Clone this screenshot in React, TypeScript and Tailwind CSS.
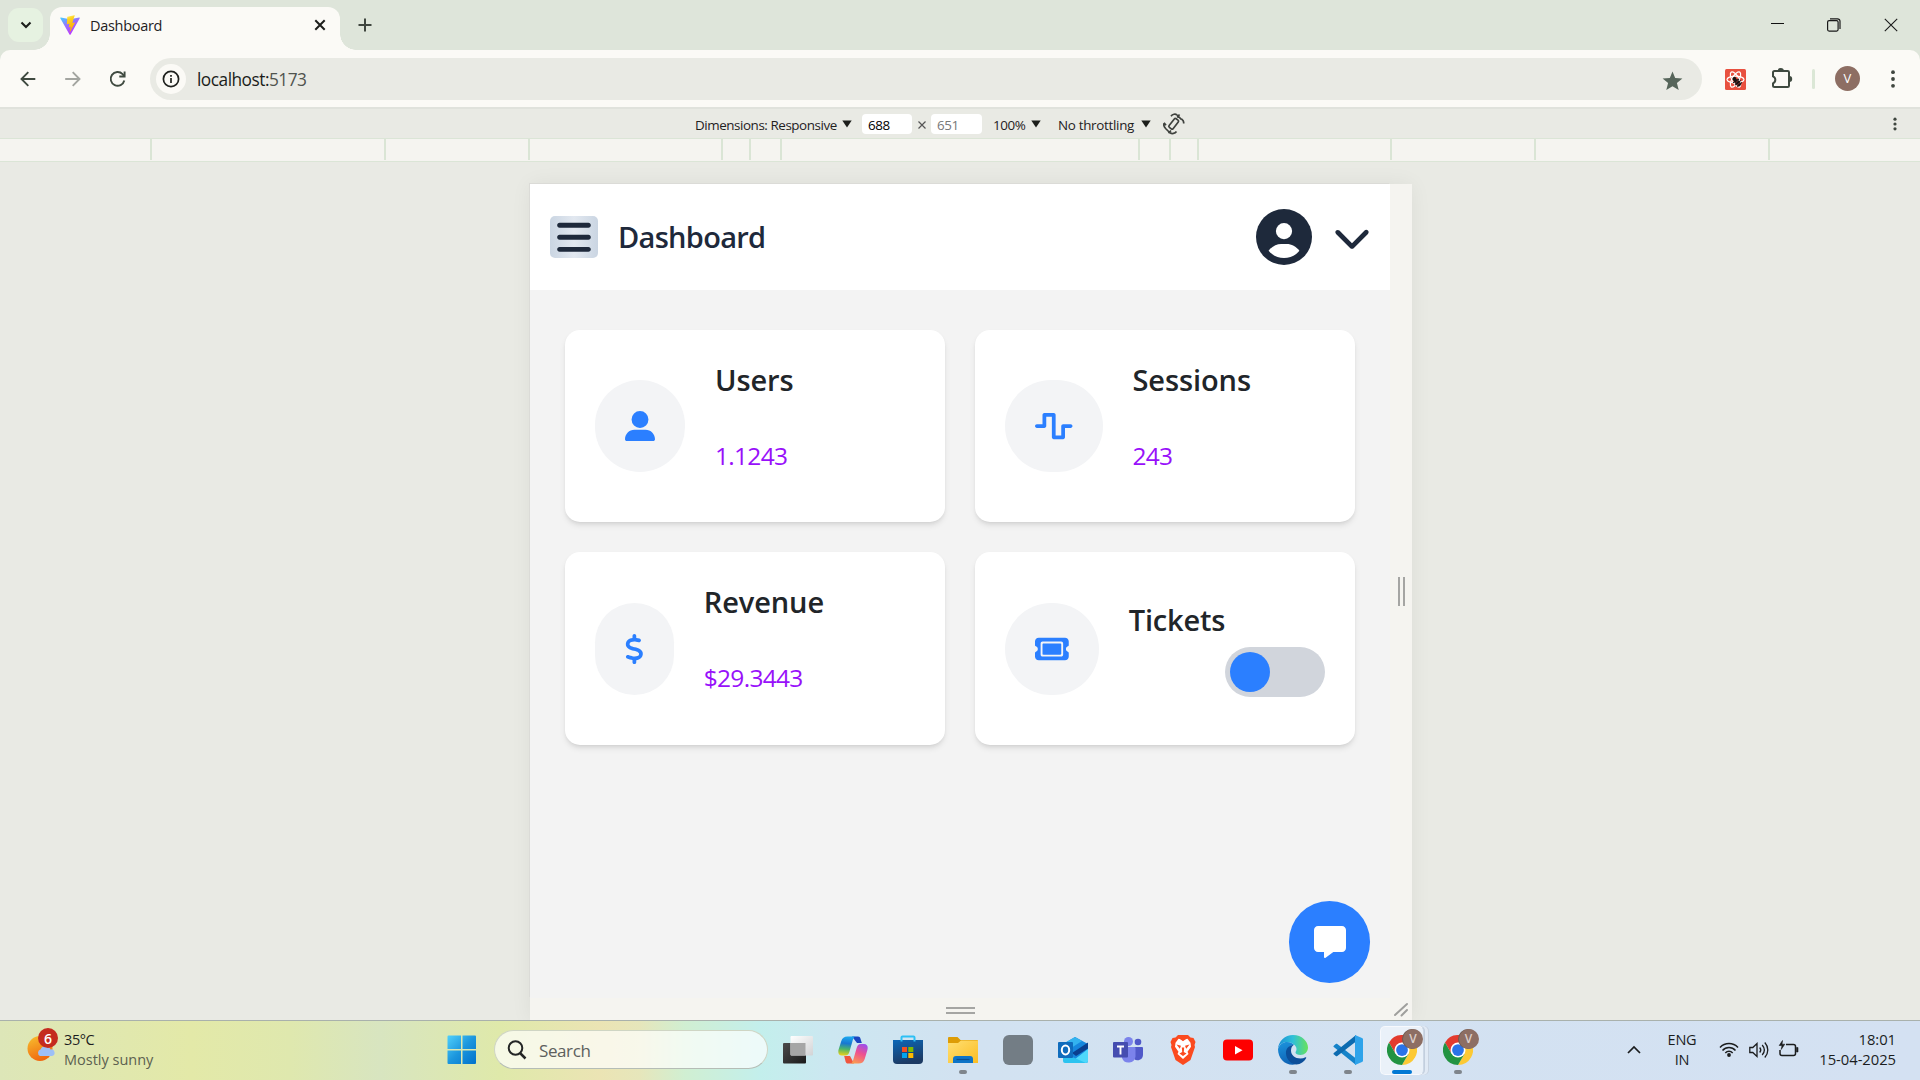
import React from "react";
import { FaUserLarge, FaWaveSquare, FaDollarSign, FaTicket, FaBars, FaChevronDown, FaMessage } from "react-icons/fa6";

const Caret = ({ className = "" }: { className?: string }) => (
  <svg className={`shrink-0 ${className}`} width="10" height="8" viewBox="0 0 10 8">
    <path d="M0.3 0.5h9.4L5 7.6z" fill="#1c1e1b" />
  </svg>
);

const Dots = ({ r, gap, className = "" }: { r: number; gap: number; className?: string }) => (
  <svg className={className} width="6" height="20" viewBox="0 0 6 20" fill="#3f463f">
    <circle cx="3" cy={10 - gap} r={r} />
    <circle cx="3" cy="10" r={r} />
    <circle cx="3" cy={10 + gap} r={r} />
  </svg>
);

function ViteLogo() {
  return (
    <svg width="20" height="20" viewBox="0 0 32 32">
      <defs>
        <linearGradient id="va" x1="0" y1="0" x2="0.6" y2="1">
          <stop offset="0" stopColor="#41D1FF" />
          <stop offset="0.5" stopColor="#9b6cff" />
          <stop offset="1" stopColor="#BD34FE" />
        </linearGradient>
        <linearGradient id="vb" x1="0.4" y1="0" x2="0.6" y2="1">
          <stop offset="0" stopColor="#FFEA5A" />
          <stop offset="0.2" stopColor="#FFD21f" />
          <stop offset="1" stopColor="#FFA200" />
        </linearGradient>
      </defs>
      <path d="M31.6 5.2 16.8 31.4c-.3.5-1 .5-1.4 0L.5 5.2c-.3-.6.2-1.3.8-1.1L16 6.7l14.8-2.6c.7-.1 1.1.5.8 1.1z" fill="url(#va)" />
      <path d="M23 .5 12 2.6c-.3 0-.4.2-.4.4L11 14.4c0 .3.2.5.5.4l3-.7c.3 0 .5.2.5.5l-1 4.5c0 .3.2.6.5.5l2-.6c.3 0 .5.2.5.5l-1.500 7c0 .4.5.7.7.3L24 12.500c.2-.3 0-.6-.4-.5l-3.100.6c-.3 0-.5-.2-.5-.5l2-7.100L23.500 1c0-.3-.2-.6-.5-.5z" fill="url(#vb)" />
    </svg>
  );
}

function TabStrip() {
  return (
    <div className="flex h-[50px] bg-[#dee5da]">
      <div className="ml-2 mt-2 flex h-[34px] w-[35px] items-center justify-center rounded-[11px] bg-[#e6f2e1]">
        <svg width="12" height="8" viewBox="0 0 12 8" fill="none" stroke="#1c1e1b" strokeWidth="2.1">
          <path d="M1.500 1.500 6 6l4.500-4.500" />
        </svg>
      </div>
      <div className="relative ml-[7px] mt-[7px] flex h-[43px] w-[290px] rounded-t-[12px] bg-[#fbfaf6]">
        <div className="absolute bottom-0 -left-4 size-4 bg-[radial-gradient(circle_at_0_0,transparent_15.5px,#fbfaf6_16px)]" />
        <div className="absolute bottom-0 -right-4 size-4 bg-[radial-gradient(circle_at_100%_0,transparent_15.5px,#fbfaf6_16px)]" />
        <div className="ml-[10px] mt-2">
          <ViteLogo />
        </div>
        <span className="ml-[10px] mt-[7px] text-[14.500px] leading-6 tracking-[-0.3px] text-[#1f211e]">Dashboard</span>
        <svg className="absolute left-[264px] top-[12px]" width="12" height="12" viewBox="0 0 12 12" stroke="#1c1e1b" strokeWidth="2">
          <path d="M1.300 1.300l9.400 9.400M10.700 1.300l-9.400 9.400" />
        </svg>
      </div>
      <svg className="ml-[18px] mt-[18px]" width="14" height="14" viewBox="0 0 14 14" stroke="#3f463f" strokeWidth="2">
        <path d="M7 .5v13M.5 7h13" />
      </svg>
      <div className="ml-auto mr-[22px] flex">
        <svg className="mt-[23px]" width="13" height="2">
          <rect y="0" width="13" height="1" fill="#111" />
        </svg>
        <svg className="ml-[43px] mt-[18px]" width="14" height="14" viewBox="0 0 14 14" fill="none" stroke="#1a1a1a" strokeWidth="1.200">
          <rect x=".6" y="2.600" width="10.500" height="10.500" rx="1.500" />
          <path d="M3 .8h7.500a2.500 2.500 0 0 1 2.500 2.500V11" />
        </svg>
        <svg className="ml-[43px] mt-[18px]" width="14" height="14" viewBox="0 0 14 14" stroke="#1a1a1a" strokeWidth="1.100">
          <path d="M.8.8l12.400 12.400M13.200.8.8 13.200" />
        </svg>
      </div>
    </div>
  );
}

function AddressBar() {
  return (
    <div className="bg-[#dee5da]">
      <div className="flex h-[57px] rounded-t-[10px] bg-[#fbfaf6] pt-2">
        <svg className="ml-[20px] mt-[13px]" width="16" height="16" viewBox="0 0 16 16" fill="none" stroke="#3f4a40" strokeWidth="1.900">
          <path d="M15.300 8H1.800M8.300 1.200 1.500 8l6.800 6.800" />
        </svg>
        <svg className="ml-[29px] mt-[13px]" width="16" height="16" viewBox="0 0 16 16" fill="none" stroke="#a3a5a0" strokeWidth="1.900">
          <path d="M.2 8h14M7.700 1.200 14.500 8l-6.800 6.800" />
        </svg>
        <svg className="ml-[28px] mt-[12px]" width="18" height="18" viewBox="0 0 18 18" fill="none" stroke="#3f4a40" strokeWidth="1.900">
          <path d="M15.300 10.500A6.900 6.900 0 1 1 13.600 4.100L15 5.800" />
          <path d="M15.600 1.500v5h-5.300" />
        </svg>
        <div className="ml-[23px] flex h-[42px] w-[1552px] items-center rounded-full bg-[#e9eae4] pl-[6px] pr-[19px]">
          <div className="flex size-[30px] items-center justify-center rounded-full bg-[#fbfaf6]">
            <svg width="18" height="18" viewBox="0 0 18 18" fill="none" stroke="#1f211e" strokeWidth="1.700">
              <circle cx="9" cy="9" r="7.600" />
              <path d="M9 8v5M9 5v1.700" />
            </svg>
          </div>
          <span className="ml-[11px] mt-[2px] text-[17.300px] leading-6 tracking-[-0.500px] text-[#1b1d1a]">
            localhost:<span className="text-[#50544e]">5173</span>
          </span>
          <svg className="ml-auto mt-[3px]" width="21" height="20" viewBox="0 0 21 20">
            <path d="M10.500.500l2.700 6.600 7.200.5-5.500 4.500 1.800 7L10.500 15.300l-6.200 3.800 1.800-7L.6 7.600l7.200-.5z" fill="#56655a" />
          </svg>
        </div>
        <svg className="ml-[23px] mt-[11px]" width="21" height="21" viewBox="0 0 21 21">
          <rect width="21" height="21" rx="1.500" fill="#e8503f" />
          <g fill="none" stroke="#fff" strokeWidth="1.200">
            <ellipse cx="10.500" cy="10.500" rx="8.500" ry="3.400" />
            <ellipse cx="10.500" cy="10.500" rx="8.500" ry="3.400" transform="rotate(60 10.500 10.500)" />
            <ellipse cx="10.500" cy="10.500" rx="8.500" ry="3.400" transform="rotate(120 10.500 10.500)" />
          </g>
          <g transform="rotate(-40 12 13)" fill="#151515">
            <circle cx="12" cy="9" r="2" />
            <ellipse cx="12" cy="14" rx="2.400" ry="4" />
            <path d="M8.500 11l7 1M8.500 14.200h7.500M9 17l6.500-.5" stroke="#151515" strokeWidth="1" />
            <path d="M10 12.800l4-.3M10 15.400h4" stroke="#a33" strokeWidth=".7" />
          </g>
        </svg>
        <svg className="ml-[25px] mt-[10px]" width="22" height="21" viewBox="0 0 22 21">
          <path d="M3.500 3h13.200a1.300 1.300 0 0 1 1.300 1.300v13.400a1.300 1.300 0 0 1-1.300 1.300H3.500a1.500 1.500 0 0 1-1.500-1.500v-2.200a3.800 3.800 0 0 0 0-7V4.500A1.500 1.500 0 0 1 3.500 3z" fill="none" stroke="#3f4a40" strokeWidth="2" />
          <path d="M6.800 2.500a3 2.500 0 0 1 6 0zM18.500 8a2.700 3 0 0 1 0 6z" fill="#3f4a40" />
        </svg>
        <div className="ml-[19px] mt-[11px] h-[20px] w-[3px] rounded bg-[#dbe7d6]" />
        <div className="ml-[20px] mt-[8px] flex size-[25px] items-center justify-center rounded-full bg-[#8d6e63] text-[13px] text-white">V</div>
        <Dots r={1.900} gap={6.800} className="ml-[29.500px] mt-[11px]" />
      </div>
    </div>
  );
}

function DeviceToolbar() {
  return (
    <div className="flex h-[31px] items-center border-t-2 border-[#e0e2dc] bg-[#e9eae4] pl-[695px] text-[13.400px] tracking-[-0.430px] text-[#1f211e]">
      <span className="w-[147px] whitespace-nowrap pt-[3px]">Dimensions: Responsive</span>
      <Caret className="mt-px" />
      <span className="ml-[10px] mt-px h-5 w-[50px] rounded bg-white pl-[6px] pt-px leading-5 text-black">688</span>
      <svg className="ml-[6px] mt-[2px]" width="8" height="8" viewBox="0 0 8 8" stroke="#555" strokeWidth="1.200">
        <path d="M.5.500l7 7M7.500.500l-7 7" />
      </svg>
      <span className="ml-[5px] mt-px h-5 w-[51px] rounded bg-white pl-[6px] pt-px leading-5 text-[#777]">651</span>
      <span className="ml-[11px] w-[38px] pt-[3px]">100%</span>
      <Caret className="mt-px" />
      <span className="ml-[17px] w-[83px] whitespace-nowrap pt-[3px] tracking-[-0.3px]">No throttling</span>
      <Caret className="mt-px" />
      <svg className="ml-[12px]" width="22" height="22" viewBox="0 0 22 22" fill="none" stroke="#3f423e" strokeWidth="1.700">
        <rect x="8.200" y="5.300" width="5" height="11" rx="1.300" transform="rotate(38 10.700 10.800)" />
        <path d="M8 3.200C9.500 1 12.500.6 14 2l4.300 4.300M16.500 1.500l-2.300 3M20.500 10.500c.6-1.800-.2-3.200-2-4.500" />
        <path d="M1 10.500c-.6 1.800.2 3.500 1.600 5l4 4M5.500 20.200 8 17.500M13.500 18.500c-1.500 2.200-4.500 2.600-6.500 1.200M3 12.300l-2-2.500" />
      </svg>
      <Dots r={1.600} gap={4.800} className="ml-auto mr-[22px]" />
    </div>
  );
}

function Ruler() {
  const marks = [150, 384, 528, 721, 749, 780, 1138, 1169, 1197, 1390, 1534, 1768];
  return (
    <div className="flex h-[24px] border-y border-[#dbe5d6] bg-[#f5f4f0]">
      {marks.map((x, i) => (
        <div
          key={x}
          className="h-[21px] w-[2px] shrink-0 bg-[#dae5d5]"
          style={{ marginLeft: i === 0 ? x : x - marks[i - 1] - 2 }}
        />
      ))}
    </div>
  );
}

function StatCard({ icon, title, value }: { icon: React.ReactNode; title: string; value: string }) {
  return (
    <div className="flex items-center gap-[30px] rounded-[15px] bg-white p-[30px] shadow-md">
      <div className="rounded-full bg-[#f3f4f6] px-[30px] py-[31px] text-[#2b7fff]">{icon}</div>
      <div className="-mt-px flex h-[132px] flex-col">
        <h2 className="text-[29px] font-semibold leading-10 tracking-[-0.1px] text-[#212529]">{title}</h2>
        <p className="mt-[38px] text-[24.500px] leading-9 tracking-[-0.7px] text-[#9810fa]">{value}</p>
      </div>
    </div>
  );
}

function DashboardPage() {
  return (
    <div className="relative h-[814px] w-[860px] bg-[#f3f3f3]">
      <header className="flex h-[106px] items-center bg-white pl-5 pr-[19px] text-[#1e293b]">
        <button className="flex h-[42px] w-[48px] items-center justify-center rounded-[5px] bg-[linear-gradient(to_right,#cad5e2,#e2e8f0,#cad5e2)]">
          <FaBars className="h-[38.500px] w-[34px]" />
        </button>
        <h1 className="ml-[20px] text-[29px] font-semibold tracking-[-0.7px]">Dashboard</h1>
        <svg className="ml-auto" width="56" height="56" viewBox="2 2 20 20">
          <circle cx="12" cy="12" r="10" fill="#1e293b" />
          <circle cx="12" cy="9.900" r="2.900" fill="#fff" />
          <path d="M6.500 16.900C7.600 15.400 9.400 14.500 11 14.500h2c1.600 0 3.400.9 4.500 2.400-1.300 1.700-3.300 2.600-5.500 2.600s-4.200-.9-5.500-2.600z" fill="#fff" />
        </svg>
        <FaChevronDown className="ml-[21px] h-[38px] w-[38px]" />
      </header>
      <main className="grid grid-cols-2 grid-rows-[192px_193px] gap-[30px] px-[35px] pt-[40px]">
        <StatCard icon={<FaUserLarge size={30} />} title="Users" value="1.1243" />
        <StatCard icon={<FaWaveSquare className="h-[30px] w-[37.500px]" />} title="Sessions" value="243" />
        <StatCard icon={<FaDollarSign className="h-[30px] w-[18.750px]" />} title="Revenue" value="$29.3443" />
        <div className="flex items-center rounded-[15px] bg-white p-[30px] shadow-md">
          <div className="rounded-full bg-[#f3f4f6] px-[30px] py-[31px] text-[#2b7fff]">
            <FaTicket className="h-[30px] w-[33.750px]" />
          </div>
          <h2 className="-mt-[58px] ml-[30px] w-[96px] text-[29px] font-semibold leading-10 tracking-[-0.2px] text-[#212529]">Tickets</h2>
          <div className="mt-[47px] h-[50px] w-[100px] shrink-0 rounded-full bg-[#d1d5dc] p-[5px]">
            <div className="size-10 rounded-full bg-[#2b7fff]" />
          </div>
        </div>
      </main>
      <div className="absolute bottom-[15px] right-[20px] flex h-[82px] w-[81px] items-center justify-center rounded-full bg-[#2b7fff] text-white">
        <FaMessage size={32} />
      </div>
    </div>
  );
}

function DeviceStage() {
  return (
    <div className="h-[858px] overflow-hidden bg-[#e9eae4] pl-[530px] pt-[22px]">
      <div className="flex h-[836px] w-[882px] flex-wrap bg-[#f5f4f0] shadow-[0_0_20px_rgba(0,0,0,0.06)]">
        <div className="shadow-[-1px_-1px_0_#dbdbd7]">
          <DashboardPage />
        </div>
        <div className="flex h-[814px] w-[22px] items-center justify-center gap-[3px]">
          <div className="h-[29px] w-[2px] bg-[#a5a5a3]" />
          <div className="h-[29px] w-[2px] bg-[#a5a5a3]" />
        </div>
        <div className="flex h-[22px] w-[860px] flex-col items-center justify-center gap-[3px] pt-[2px]">
          <div className="h-[2px] w-[29px] bg-[#a5a5a3]" />
          <div className="h-[2px] w-[29px] bg-[#a5a5a3]" />
        </div>
        <svg width="22" height="22" viewBox="0 0 22 22" stroke="#9f9f9d" strokeWidth="2" strokeLinecap="round">
          <path d="M5 17 17 6M11.500 17.500l5.500-5.500" />
        </svg>
      </div>
    </div>
  );
}

function ChromeIcon() {
  return (
    <div className="relative size-[30px]">
      <svg width="30" height="30" viewBox="0 0 48 48">
        <path d="M24 12h20.800A24 24 0 0 1 24 48l10.400-18z" fill="#fcc934" />
        <path d="M24 12h20.800A24 24 0 0 0 3.200 12l10.400 18z" fill="#e33b2e" />
        <path d="M34.400 30 24 48A24 24 0 0 1 3.200 12l10.400 18z" fill="#229342" />
        <circle cx="24" cy="24" r="12" fill="#fff" />
        <circle cx="24" cy="24" r="9.400" fill="#2a73e8" />
      </svg>
      <div className="absolute -top-[6px] left-[16px] flex size-[20px] items-center justify-center rounded-full bg-[#8d6e63] text-[12px] font-semibold text-[#dccfca] shadow-[-1px_0_0_#6f5850]">V</div>
    </div>
  );
}

const StartIcon = () => (
  <svg width="30" height="30" viewBox="0 0 30 30">
    <defs>
      <linearGradient id="st" x1="0" y1="0" x2="1" y2="1">
        <stop offset="0" stopColor="#4fd0fb" />
        <stop offset="0.500" stopColor="#1c96dd" />
        <stop offset="1" stopColor="#0071cc" />
      </linearGradient>
    </defs>
    <path d="M1.500.5H14V14H.5V1.500a1 1 0 0 1 1-1zM15.500.5H28a1 1 0 0 1 1 1V14H15.500zM.5 15.500H14V29H1.500a1 1 0 0 1-1-1zM15.500 15.500H29V28a1 1 0 0 1-1 1H15.500z" fill="url(#st)" />
  </svg>
);

const TaskViewIcon = () => (
  <svg width="30" height="30" viewBox="0 0 30 30">
    <defs>
      <linearGradient id="tv" x1="0" y1="0" x2="1" y2="1">
        <stop offset="0" stopColor="#4b4b4b" />
        <stop offset="1" stopColor="#1b1b1b" />
      </linearGradient>
      <linearGradient id="tw" x1="0" y1="0" x2="1" y2="1">
        <stop offset="0" stopColor="#fff" />
        <stop offset="1" stopColor="#d2d3d5" />
      </linearGradient>
    </defs>
    <rect x="0" y="8" width="23" height="20.500" rx="1" fill="url(#tv)" />
    <rect x="7.500" y="1" width="22.500" height="19.500" rx="1" fill="url(#tw)" />
    <path d="M7.500 8H22.500v12.500H8.500a1 1 0 0 1-1-1z" fill="#a6a6a6" />
  </svg>
);

const CopilotIcon = () => (
  <svg width="30" height="30" viewBox="0 0 30 30">
    <defs>
      <linearGradient id="ca" x1="0.300" y1="0" x2="0.200" y2="1">
        <stop offset="0" stopColor="#1aa7ee" />
        <stop offset="0.350" stopColor="#1877d2" />
        <stop offset="0.650" stopColor="#4bb56a" />
        <stop offset="1" stopColor="#f2d216" />
      </linearGradient>
      <linearGradient id="cb" x1="0.700" y1="0" x2="0.300" y2="1">
        <stop offset="0" stopColor="#a04de8" />
        <stop offset="0.450" stopColor="#ee5190" />
        <stop offset="1" stopColor="#fb9b51" />
      </linearGradient>
    </defs>
    <path d="M14 1.500h6c1.500 0 2 .8 2.500 2.300l1.300 4.200H19z" fill="#1b45c0" />
    <path d="M9.500 1.500h8.500c-2 .2-2.600 1.500-3.200 3.500l-3.300 11.500c-.7 2.500-1.700 4-4.500 4H4C.5 20.500-.2 17.500.6 14.500L3.300 6c1-3 2.800-4.500 6.200-4.500z" fill="url(#ca)" />
    <path d="M16 28.500h-6c-1.500 0-2-.8-2.500-2.300L6.200 21H12z" fill="#f0553e" />
    <path d="M20.500 28.500H12c2-.2 2.600-1.500 3.200-3.500l3.300-11.500c.7-2.500 1.700-4.500 4.500-4.500h3c3.500 0 4.200 3 3.400 6L26.700 24c-1 3-2.800 4.500-6.200 4.500z" fill="url(#cb)" />
  </svg>
);

const StoreIcon = () => (
  <svg width="30" height="30" viewBox="0 0 30 30">
    <defs>
      <linearGradient id="sa" x1="0" y1="0" x2="0.300" y2="1">
        <stop offset="0" stopColor="#0b67b8" />
        <stop offset="1" stopColor="#1c3a63" />
      </linearGradient>
    </defs>
    <path d="M8.500 7V2.500a1 1 0 0 1 1-1h11a1 1 0 0 1 1 1V7" fill="none" stroke="#2cc0f5" strokeWidth="2" />
    <path d="M0 5h30v20a4 4 0 0 1-4 4H4a4 4 0 0 1-4-4z" fill="url(#sa)" />
    <path d="M9 12h5v5H9z" fill="#f25022" />
    <path d="M15.300 12h5v5h-5z" fill="#7fba00" />
    <path d="M9 18h5v5H9z" fill="#00a4ef" />
    <path d="M15.300 18h5v5h-5z" fill="#ffb900" />
    <path d="M8.500 5v1.500M21.500 5v1.500" stroke="#2cc0f5" strokeWidth="2" />
  </svg>
);

const FolderIcon = () => (
  <svg width="30" height="30" viewBox="0 0 30 30">
    <defs>
      <linearGradient id="fa" x1="0" y1="0" x2="1" y2="1">
        <stop offset="0" stopColor="#ffdf73" />
        <stop offset="1" stopColor="#fbbd22" />
      </linearGradient>
    </defs>
    <path d="M0 3a1 1 0 0 1 1-1h8.500L12.500 5H29a1 1 0 0 1 1 1v6H0z" fill="#dd9c06" />
    <path d="M0 8h10l3-2.500h17V28H0z" fill="url(#fa)" />
    <path d="M5 28v-4a3 3 0 0 1 3-3h14a3 3 0 0 1 3 3v4z" fill="#0e74c7" />
    <path d="M8.500 24.500h13" stroke="#0a4f90" strokeWidth="1.200" />
  </svg>
);

const OutlookIcon = () => (
  <svg width="30" height="30" viewBox="0 0 30 30">
    <path d="M5 9 17 2l13 7v17a2 2 0 0 1-2 2H7z" fill="#1687dd" />
    <path d="M5 9 17 2l7 4-14 9z" fill="#33b3ef" />
    <path d="M14 18 30 7.500v6L18 21z" fill="#0a3f8f" />
    <path d="M12 28 30 14v12a2 2 0 0 1-2 2z" fill="#4fd8fb" />
    <path d="M5 18l23 10H7a2 2 0 0 1-2-2z" fill="#2cc3f0" />
    <rect y="7" width="15" height="16" rx="1" fill="#0f6cbd" />
    <ellipse cx="7.500" cy="15" rx="3.700" ry="4.400" fill="none" stroke="#fff" strokeWidth="2" />
  </svg>
);

const TeamsIcon = () => (
  <svg width="30" height="30" viewBox="0 0 30 30">
    <circle cx="25" cy="7" r="3.300" fill="#5059c9" />
    <path d="M19 12h10a1 1 0 0 1 1 1v7a5.500 5.500 0 0 1-9 4z" fill="#5059c9" />
    <circle cx="15.500" cy="6.500" r="4.500" fill="#7b83eb" />
    <path d="M9 12h12.500a1 1 0 0 1 1 1v8.500A7 7 0 0 1 9 23z" fill="#7b83eb" />
    <rect y="7" width="15" height="15.500" rx="1" fill="#454db0" />
    <path d="M4 11.500h7M7.500 11.500v8" stroke="#fff" strokeWidth="1.900" />
  </svg>
);

const BraveIcon = () => (
  <svg width="26" height="30" viewBox="0 0 26 30">
    <path d="M8 0h10l2.500 2.500L23.500 3l2 4-1 3 .5 2-4.500 13L13 30l-7.500-5L1 12l.5-2-1-3 2-4 3-.5z" fill="#fb4a1f" />
    <path d="M13 4.800l4.500-1 3 4 .5 4-3.500 5 1 2.200-5.500 5-5.500-5 1-2.200-3.500-5 .5-4 3-4z" fill="#fff" />
    <path d="M6.500 9.500l4.500 1.300-1.200 3zM19.500 9.500 15 10.800l1.200 3zM11.800 12.500h2.400l-.4 4.500 2.700 1.500-3.500 2.500-3.500-2.500 2.700-1.500zM10 4l3 2.300L16 4z" fill="#fb4a1f" />
  </svg>
);

const YoutubeIcon = () => (
  <svg width="30" height="30" viewBox="0 0 30 30">
    <rect y="4.500" width="30" height="21" rx="4" fill="#fe0000" />
    <path d="M12 11v8.500l7.500-4.200z" fill="#fff" />
  </svg>
);

const EdgeIcon = () => (
  <svg width="30" height="30" viewBox="0 0 30 30">
    <defs>
      <linearGradient id="ea" x1="0" y1="0.500" x2="1" y2="0.500">
        <stop offset="0" stopColor="#1b8fd6" />
        <stop offset="0.500" stopColor="#2fc0d8" />
        <stop offset="1" stopColor="#68e25a" />
      </linearGradient>
      <linearGradient id="eb" x1="0" y1="0" x2="0.300" y2="1">
        <stop offset="0" stopColor="#1c95de" />
        <stop offset="1" stopColor="#0f63b5" />
      </linearGradient>
    </defs>
    <path d="M0 14C.5 6 7 0 15 0c9 0 15 6.500 15 12.500 0 4.500-3.500 7.500-7.500 7.500-3 0-5-1.200-5-2.500 0-1 1-1.500 1-3.500C18.500 10.500 14 7 9 7c-4 0-7.500 2-9 7z" fill="url(#ea)" />
    <path d="M0 14c1.500-4.500 5-7 9-7 3 0 5.500 1.200 7 2.800-4 0-6.500 4-6 8C10.500 23 15 27 20 28a15 15 0 0 1-5 1.800C6.500 30 0 23 0 14z" fill="url(#eb)" />
    <path d="M16 9.800c-5 .5-8.500 4-8 9 .5 6 5.500 10.700 10.500 10.700 4 0 8-3 9.700-6.500.3-.7-.2-1-.7-.7-1.500.8-3.200 1.200-5 1.200-5.500 0-9.500-3.500-9.500-8 0-2.500 1-4.700 3-5.700z" fill="#0c4f9a" />
  </svg>
);

const VscodeIcon = () => (
  <svg width="30" height="30" viewBox="0 0 30 30">
    <path d="M1 10.500 2.800 9c.5-.4 1-.4 1.500 0L23 23.500V30L.8 12c-.6-.5-.4-1 .2-1.500z" fill="#1583c9" />
    <path d="M1 19.500 2.800 21c.5.4 1 .4 1.500 0L23 6.500V0L.8 18c-.6.500-.4 1 .2 1.500z" fill="#0c6bb0" />
    <path d="M22 0l7 3a1.500 1.500 0 0 1 1 1.500v21a1.500 1.500 0 0 1-1 1.500l-7 3z" fill="#2ea3ea" />
  </svg>
);

function TaskItem({ children, state }: { children: React.ReactNode; state?: "open" }) {
  return (
    <div className="flex w-[55px] flex-col items-center pt-[14px]">
      <div className="flex h-[30px] items-center">{children}</div>
      {state === "open" && <div className="mt-[5px] h-1 w-[8px] rounded-full bg-[#7f858c]" />}
    </div>
  );
}

function Taskbar() {
  return (
    <div className="flex h-[60px] border-t border-[#a9b1ac] bg-[linear-gradient(to_right,#dde6b8_0px,#e3e9a8_190px,#dfe8ae_290px,#d8e5c0_380px,#dfe9aa_500px,#ebe4b4_600px,#e6e6bb_640px,#d0efd2_685px,#c3efec_760px,#cce7f1_830px,#d2e2f1_960px,#d4e1f2_1920px)] text-[#1b1d1e]">
      <div className="relative ml-[27px] mt-[13px] h-[30px] w-[30px]">
        <svg width="30" height="30" viewBox="0 0 30 30">
          <defs>
            <linearGradient id="sun" x1="0.200" y1="0" x2="0.600" y2="1">
              <stop offset="0" stopColor="#f7bb2d" />
              <stop offset="1" stopColor="#f0640d" />
            </linearGradient>
          </defs>
          <circle cx="13" cy="14.500" r="12.500" fill="url(#sun)" />
          <path d="M13 22a3.500 3.500 0 0 1 .5-6.500 5.500 5.500 0 0 1 10 0A3.300 3.300 0 0 1 25 22z" fill="#9dc0f7" />
        </svg>
        <div className="absolute -top-[6px] left-[11px] flex size-[20px] items-center justify-center rounded-full bg-[#c42b1f] text-[14px] font-semibold text-white">6</div>
      </div>
      <div className="ml-[7px] flex w-[383px] flex-col pt-[9px] text-[14.500px] leading-5">
        <span className="tracking-[-0.4px]">35°C</span>
        <span className="text-[#5c6150]">Mostly sunny</span>
      </div>
      <div className="pt-[14px]">
        <StartIcon />
      </div>
      <div className="ml-[17px] mt-[9px] flex h-[39px] w-[274px] items-center rounded-full border border-[#cfd5c4] border-b-[#b5bdb6] bg-white/70 pl-[12px]">
        <svg width="20" height="20" viewBox="0 0 20 20" fill="none" stroke="#242626" strokeWidth="2">
          <circle cx="8.500" cy="8" r="6.800" />
          <path d="M13 13l5.500 5.500" strokeWidth="2.500" />
        </svg>
        <span className="ml-[12px] pt-[2px] text-[17px] leading-6 tracking-[-0.4px] text-[#5d605d]">Search</span>
      </div>
      <div className="ml-[2px] flex">
        <TaskItem><TaskViewIcon /></TaskItem>
        <TaskItem><CopilotIcon /></TaskItem>
        <TaskItem><StoreIcon /></TaskItem>
        <TaskItem state="open"><FolderIcon /></TaskItem>
        <TaskItem><div className="size-[30px] rounded-[6px] bg-[#737d85]" /></TaskItem>
        <TaskItem><OutlookIcon /></TaskItem>
        <TaskItem><TeamsIcon /></TaskItem>
        <TaskItem><BraveIcon /></TaskItem>
        <TaskItem><YoutubeIcon /></TaskItem>
        <TaskItem state="open"><EdgeIcon /></TaskItem>
        <TaskItem state="open"><VscodeIcon /></TaskItem>
        <div className="flex w-[55px] justify-center pt-[5px]">
          <div className="-ml-px flex h-[49px] w-[44px] flex-col items-center rounded-[5px] border border-white/60 border-r-[#cdd8e6] bg-[#eaf1f9] pt-[8px] shadow-[1px_0_0_#c3cfde,4px_0_0_#e1eaf5,5px_0_0_#c8d3e1]">
            <ChromeIcon />
            <div className="mt-[5px] h-1 w-[20px] shrink-0 rounded-full bg-[#0078d4]" />
          </div>
        </div>
        <TaskItem state="open"><ChromeIcon /></TaskItem>
      </div>
      <svg className="ml-auto mt-[24px]" width="14" height="9" viewBox="0 0 14 9" fill="none" stroke="#1b1d1e" strokeWidth="1.700">
        <path d="M1 8l6-6 6 6" />
      </svg>
      <div className="ml-[22px] w-[38px] pt-[9px] text-center text-[14.500px] leading-5 tracking-[-0.2px]">
        ENG
        <br />
        IN
      </div>
      <svg className="ml-[18px] mt-[19px]" width="20" height="18" viewBox="0 0 20 18" fill="none" stroke="#1b1d1e" strokeWidth="1.500">
        <path d="M1 7.500c5-5.300 13-5.300 18 0M3.500 10.500c3.600-4 9.400-4 13 0M6.300 13c2.200-2.300 5.200-2.300 7.400 0" />
        <circle cx="10" cy="15" r="1.900" fill="#1b1d1e" stroke="none" />
      </svg>
      <svg className="ml-[10px] mt-[20px]" width="20" height="18" viewBox="0 0 20 18" fill="none" stroke="#1b1d1e" strokeWidth="1.300">
        <path d="M.8 6.500h3L8 2.500v13l-4.200-4h-3zM10.700 6.500c1.300 1.500 1.300 3.500 0 5M13.200 4c2.600 3 2.600 7 0 10M15.800 1.500c4 4.500 4 10.500 0 15" />
      </svg>
      <svg className="ml-[9px] mt-[19px]" width="21" height="18" viewBox="0 0 21 18" fill="none" stroke="#1b1d1e" strokeWidth="1.500">
        <path d="M8 4.500h7.500a2 2 0 0 1 2 2v7a2 2 0 0 1-2 2H4a2 2 0 0 1-2-2V10" />
        <path d="M18.500 7.500h1.500v4.500h-1.500zM4.500.5 1.200 5.500H4l-.8 4L6.800 4.200H4z" fill="#1b1d1e" strokeWidth=".6" />
      </svg>
      <div className="ml-[9px] mr-[24px] w-[88px] whitespace-nowrap pt-[8px] text-right text-[14.800px] leading-5 tracking-[-0.05px]">
        18:01
        <br />
        15-04-2025
      </div>
    </div>
  );
}

export default function App() {
  return (
    <div className="h-[1080px] w-[1920px] overflow-hidden font-['Open_Sans','Noto_Sans',sans-serif]">
      <TabStrip />
      <AddressBar />
      <DeviceToolbar />
      <Ruler />
      <DeviceStage />
      <Taskbar />
    </div>
  );
}
